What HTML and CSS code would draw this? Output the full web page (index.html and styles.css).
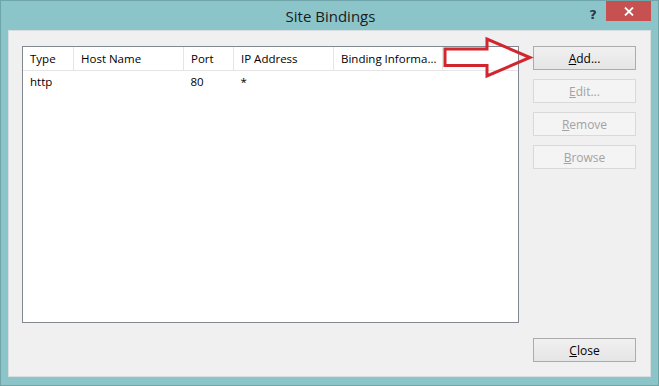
FILE: index.html
```html
<!DOCTYPE html>
<html lang="en">
<head>
  <meta charset="UTF-8">
  <title>Site Bindings</title>
  <link rel="stylesheet" href="styles.css">
</head>
<body>
  <div class="window">
    <div class="titlebar">
      <span></span>
      <span class="title">Site Bindings</span>
      <div class="controls">
        <span class="help">?</span>
        <span class="close-x">
          <svg width="10" height="9" viewBox="0 0 10 9"><path d="M1 0.5 L9 8.5 M9 0.5 L1 8.5" stroke="#fff" stroke-width="1.8"/></svg>
        </span>
      </div>
    </div>

    <div class="client">
      <div class="listbox">
        <table>
          <thead>
            <tr>
              <th class="c-type">Type</th>
              <th class="c-host">Host Name</th>
              <th class="c-port">Port</th>
              <th class="c-ip">IP Address</th>
              <th class="c-bind">Binding Informa...</th>
              <th class="c-rest"></th>
            </tr>
          </thead>
          <tbody>
            <tr>
              <td>http</td>
              <td></td>
              <td>80</td>
              <td>*</td>
              <td></td>
              <td></td>
            </tr>
          </tbody>
        </table>
      </div>

      <div class="buttons">
        <button class="btn"><u>A</u>dd...</button>
        <button class="btn" disabled><u>E</u>dit...</button>
        <button class="btn" disabled><u>R</u>emove</button>
        <button class="btn" disabled><u>B</u>rowse</button>
      </div>

      <div class="footer">
        <button class="btn"><u>C</u>lose</button>
      </div>
    </div>

    <!-- red callout arrow pointing at Add -->
    <svg class="arrow" width="659" height="386" viewBox="0 0 659 386">
      <polygon points="445,49 487,49 487,39 530,57.5 487,76 487,65.5 445,65.5" fill="none" stroke="#d1262d" stroke-width="3" stroke-linejoin="miter"/>
    </svg>
  </div>
</body>
</html>
```

FILE: styles.css
```css
body {
  margin: 0;
  font-family: "Segoe UI", "Open Sans", "Noto Sans", sans-serif;
  font-size: 12px;
  color: #000;
}
.window {
  position: relative;
  width: 659px;
  height: 386px;
  box-sizing: border-box;
  background: #8bc5ca;
  border: 1px solid #6fa4a9;
  padding: 0 7px 8px 7px;
  display: flex;
  flex-direction: column;
}
.titlebar {
  height: 29px;
  display: grid;
  grid-template-columns: 1fr auto 1fr;
  align-items: start;
}
.title {
  font-size: 15px;
  color: #1b1b1b;
  line-height: 30px;
  margin-left: 2px;
}
.controls {
  justify-self: end;
  display: flex;
}
.help {
  width: 26px;
  height: 20px;
  line-height: 27px;
  text-align: center;
  font-weight: bold;
  font-size: 13px;
  color: #2b3a44;
  font-family: "DejaVu Sans", sans-serif;
}
.close-x {
  width: 45px;
  height: 20px;
  background: #c75050;
  display: flex;
  align-items: center;
  justify-content: center;
}
.client {
  flex: 1;
  background: #f0f0f0;
  border: 1px solid #d6dedf;
  padding: 15px 14px 14px 13px;
  display: grid;
  grid-template-columns: 1fr 103px;
  grid-template-rows: 277px 24px;
  column-gap: 14px;
  row-gap: 15px;
}
.listbox {
  background: #fff;
  border: 1px solid #828790;
  overflow: hidden;
}
table {
  border-collapse: collapse;
  width: 100%;
  table-layout: fixed;
  font-size: 11.5px;
}
th {
  font-weight: normal;
  text-align: left;
  height: 23px;
  padding: 0 0 0 7px;
  border-right: 1px solid #e5e5e5;
  border-bottom: 1px solid #e5e5e5;
  white-space: nowrap;
  overflow: hidden;
}
th.c-rest {
  border-right: none;
}
td {
  height: 21px;
  padding: 0 0 0 7px;
}
.c-type { width: 43px; }
.c-host { width: 102px; }
.c-port { width: 42px; }
.c-ip { width: 92px; }
.c-bind { width: 101px; }
.buttons {
  display: flex;
  flex-direction: column;
  gap: 9px;
}
.btn + .btn {
  margin-top: 0;
}
.footer {
  grid-column: 2;
}
.btn {
  width: 103px;
  height: 24px;
  padding: 0;
  font-family: inherit;
  font-size: 12px;
  color: #000;
  border: 1px solid #acacac;
  background: linear-gradient(to bottom, #f0f0f0, #e5e5e5);
}
.btn:disabled {
  color: #a3a3a3;
  border-color: #d9d9d9;
  background: #f4f4f4;
}
.arrow {
  position: absolute;
  left: -1px;
  top: -1px;
  pointer-events: none;
}
```
